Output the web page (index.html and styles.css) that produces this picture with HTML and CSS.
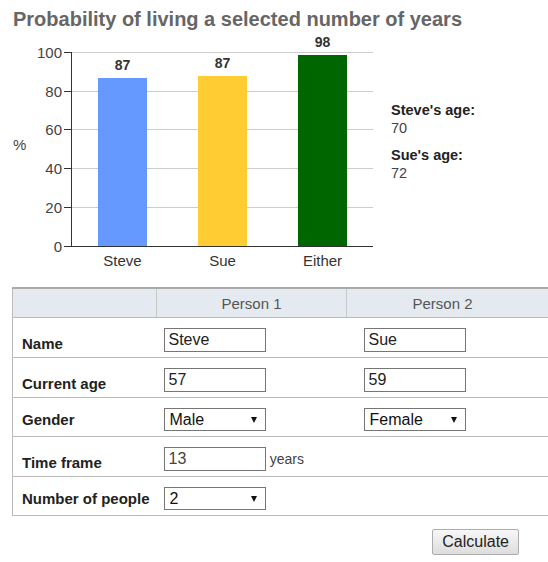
FILE: index.html
```html
<!DOCTYPE html>
<html lang="en">
<head>
  <meta charset="UTF-8">
  <meta name="viewport" content="width=device-width, initial-scale=1.0">
  <title>Probability of living</title>
  <link rel="stylesheet" href="styles.css">
</head>
<body>
  <h1 class="title">Probability of living a selected number of years</h1>

  <div class="chart-row">
    <svg class="chart" width="380" height="256" viewBox="0 0 380 256">
      <g class="grid">
        <line x1="72" y1="21.5" x2="373" y2="21.5"/>
        <line x1="72" y1="60.5" x2="373" y2="60.5"/>
        <line x1="72" y1="98.5" x2="373" y2="98.5"/>
        <line x1="72" y1="137.5" x2="373" y2="137.5"/>
        <line x1="72" y1="176.5" x2="373" y2="176.5"/>
      </g>

      <rect x="98" y="47" width="49" height="168" fill="#6699ff"/>
      <rect x="198" y="45" width="49" height="170" fill="#ffcc33"/>
      <rect x="298" y="24" width="49" height="191" fill="#006600"/>

      <g class="axis">
        <line x1="71.5" y1="21" x2="71.5" y2="216"/>
        <line x1="64" y1="215.5" x2="373" y2="215.5"/>
        <line x1="64" y1="21.5" x2="71" y2="21.5"/>
        <line x1="64" y1="60.5" x2="71" y2="60.5"/>
        <line x1="64" y1="98.5" x2="71" y2="98.5"/>
        <line x1="64" y1="137.5" x2="71" y2="137.5"/>
        <line x1="64" y1="176.5" x2="71" y2="176.5"/>
      </g>

      <g class="ticks">
        <text x="62" y="27">100</text>
        <text x="62" y="66">80</text>
        <text x="62" y="104">60</text>
        <text x="62" y="143">40</text>
        <text x="62" y="182">20</text>
        <text x="62" y="221">0</text>
      </g>

      <text class="unit" x="13" y="119">%</text>

      <g class="values">
        <text x="122.5" y="39">87</text>
        <text x="222.5" y="37">87</text>
        <text x="322.5" y="16">98</text>
      </g>

      <g class="names">
        <text x="122.5" y="235">Steve</text>
        <text x="222.5" y="235">Sue</text>
        <text x="322.5" y="235">Either</text>
      </g>
    </svg>

    <div class="ages">
      <div class="age">
        <b>Steve's age:</b>
        <span>70</span>
      </div>
      <div class="age">
        <b>Sue's age:</b>
        <span>72</span>
      </div>
    </div>
  </div>

  <table class="people">
    <colgroup>
      <col class="col-label">
      <col class="col-p1">
      <col>
    </colgroup>
    <thead>
      <tr>
        <th></th>
        <th>Person 1</th>
        <th class="last">Person 2</th>
      </tr>
    </thead>
    <tbody>
      <tr class="text-row">
        <td class="label">Name</td>
        <td class="p1"><input type="text" value="Steve"></td>
        <td class="p2"><input type="text" value="Sue"></td>
      </tr>
      <tr class="text-row">
        <td class="label">Current age</td>
        <td class="p1"><input type="text" value="57"></td>
        <td class="p2"><input type="text" value="59"></td>
      </tr>
      <tr class="select-row">
        <td class="label">Gender</td>
        <td class="p1">
          <span class="select-wrap">
            <select>
              <option selected>Male</option>
              <option>Female</option>
            </select>
          </span>
        </td>
        <td class="p2">
          <span class="select-wrap">
            <select>
              <option>Male</option>
              <option selected>Female</option>
            </select>
          </span>
        </td>
      </tr>
      <tr class="text-row">
        <td class="label">Time frame</td>
        <td class="p1" colspan="2"><input type="text" class="num" value="13"> <span class="unit-text">years</span></td>
      </tr>
      <tr class="select-row">
        <td class="label">Number of people</td>
        <td class="p1" colspan="2">
          <span class="select-wrap">
            <select>
              <option>1</option>
              <option selected>2</option>
            </select>
          </span>
        </td>
      </tr>
    </tbody>
  </table>

  <div class="actions">
    <button type="button">Calculate</button>
  </div>
</body>
</html>
```

FILE: styles.css
```css
body {
  font-family: "Liberation Sans", Arial, sans-serif;
  margin: 0;
  color: #222;
  background: white;
  overflow-x: hidden;
}
.title {
  margin: 0;
  padding: 7px 0 0 13px;
  font-size: 20px;
  line-height: 24px;
  color: #666;
}
.chart-row {
  display: flex;
}
.chart {
  display: block;
  flex: none;
}
.chart text {
  font-family: "Liberation Sans", Arial, sans-serif;
}
.grid line {
  stroke: #ccc;
  stroke-width: 1;
}
.axis line {
  stroke: #333;
  stroke-width: 1;
}
.ticks text {
  font-size: 15px;
  fill: #444;
  text-anchor: end;
}
.unit {
  font-size: 15px;
  fill: #444;
}
.values text {
  font-size: 14px;
  font-weight: bold;
  fill: #333;
  text-anchor: middle;
}
.names text {
  font-size: 15px;
  fill: #333;
  text-anchor: middle;
}
.ages {
  margin-left: 11px;
  padding-top: 70px;
  font-size: 14.5px;
  line-height: 18px;
}
.age {
  margin-bottom: 9px;
}
.age b {
  display: block;
  color: #222;
}
.age span {
  display: block;
  color: #444;
}
.people {
  margin-left: 12px;
  width: 546px;
  border-collapse: collapse;
  border-left: 1px solid #bbb;
  border-bottom: 1px solid #bbb;
  font-size: 15px;
}
.col-label {
  width: 144px;
}
.col-p1 {
  width: 190px;
}
.people th {
  height: 28px;
  padding: 0;
  background: #e4eaf0;
  border-top: 2px solid #aaa;
  border-bottom: 1px solid #bbb;
  border-left: 1px solid #c8c8c8;
  font-weight: normal;
  color: #555;
  text-align: center;
}
.people th:first-child {
  border-left: none;
}
.people th.last {
  padding-right: 20px;
}
.people td {
  padding: 10px 0 5px 0;
  border-bottom: 1px solid #bbb;
  vertical-align: top;
}
.people td.label {
  padding-left: 9px;
  font-weight: bold;
  color: #222;
}
.text-row td.label {
  vertical-align: bottom;
}
.select-row td.label {
  vertical-align: middle;
}
.people td.p1 {
  padding-left: 7px;
}
.people td.p2 {
  padding-left: 17px;
}
input {
  box-sizing: border-box;
  width: 102px;
  height: 24px;
  margin: 0;
  padding: 0 4px;
  border: 1px solid #767676;
  font-family: "Liberation Sans", Arial, sans-serif;
  font-size: 16px;
  color: #222;
  vertical-align: top;
}
input.num {
  color: #444;
}
.unit-text {
  font-size: 14px;
  color: #444;
  line-height: 24px;
}
.select-wrap {
  position: relative;
  display: inline-block;
  vertical-align: top;
}
.select-wrap::after {
  content: "";
  position: absolute;
  right: 9px;
  top: 9px;
  border-left: 3.5px solid transparent;
  border-right: 3.5px solid transparent;
  border-top: 6px solid #111;
  pointer-events: none;
}
select {
  appearance: none;
  -webkit-appearance: none;
  box-sizing: border-box;
  width: 102px;
  height: 23px;
  margin: 0;
  padding: 0 0 0 5px;
  border: 1px solid #767676;
  border-radius: 0;
  background: white;
  font-family: "Liberation Sans", Arial, sans-serif;
  font-size: 16px;
  color: #111;
  display: block;
}
.actions {
  text-align: right;
  padding: 13px 29px 0 0;
}
button {
  height: 26px;
  padding: 0 9px;
  border: 1px solid #adadad;
  border-radius: 2px;
  background: linear-gradient(#f7f7f7, #dddddd);
  font-family: "Liberation Sans", Arial, sans-serif;
  font-size: 16px;
  color: #222;
  cursor: pointer;
}
```
